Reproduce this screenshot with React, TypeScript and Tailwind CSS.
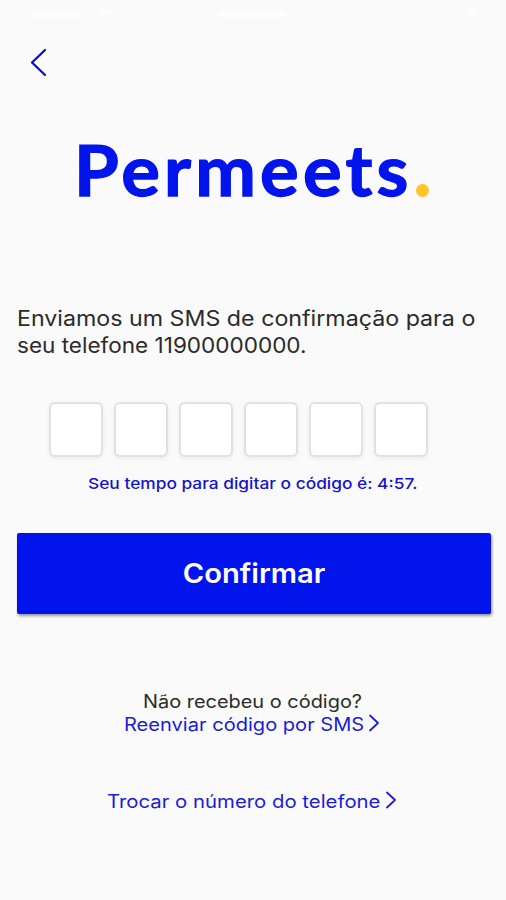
type ChevronProps = {
  points: string;
  className: string;
};

function Chevron({ points, className }: ChevronProps) {
  return (
    <svg className={className} fill="none" stroke="currentColor" strokeLinecap="round" strokeLinejoin="round">
      <polyline points={points} />
    </svg>
  );
}

function StatusBar() {
  return (
    <div className="flex h-[30px] items-center pl-[31px] pr-[31px] opacity-70">
      <div className="h-1.5 w-12 rounded-sm bg-white" />
      <div className="mb-1 ml-5 h-1 w-3 rounded-sm bg-white" />
      <div className="ml-[108px] h-1.5 w-[66px] rounded-sm bg-white" />
      <div className="mb-1 ml-auto h-2.5 w-1.5 rounded-sm bg-white" />
    </div>
  );
}

export default function App() {
  return (
    <div className="h-[900px] w-[506px] overflow-hidden bg-[#fafafa] font-['Inter',sans-serif] text-[#2b2b2b]">
      <StatusBar />

      <button className="ml-[30px] mt-[18px] block text-[#0a0ad8]" aria-label="Voltar">
        <Chevron className="h-7 w-4 stroke-[2.25]" points="15,2 2,14.5 15,27" />
      </button>

      <h1 className="ml-[74px] mt-[58px] flex h-[70px] items-end whitespace-nowrap font-['Lato',sans-serif] text-[70px] font-bold leading-[70px] text-[#0014eb]">
        <span className="w-[342px] origin-left scale-x-[1.035] tracking-[4px] [-webkit-text-stroke:1.25px_#0014eb]">Permeets</span>
        <span className="mb-[7px] size-[13px] rounded-full bg-[#ffc629]" />
      </h1>

      <p className="ml-[17px] mt-[101px] whitespace-nowrap text-[21px] leading-[27px]">
        <span className="block origin-left scale-x-[1.105]">Enviamos um SMS de confirmação para o</span>
        <span className="block origin-left scale-x-[1.073]">seu telefone 11900000000.</span>
      </p>

      <div className="ml-[49px] mt-[43px] flex gap-[11px]">
        {[0, 1, 2, 3, 4, 5].map((i) => (
          <div key={i} className="h-[55px] w-[54px] rounded-md border-2 border-[#e1e1e1] bg-white shadow-[0_2px_5px_rgba(0,0,0,0.06)]" />
        ))}
      </div>

      <p className="ml-[88px] mt-[17px] origin-left scale-x-[1.155] whitespace-nowrap text-[15px] font-medium leading-5 text-[#1414cc]">
        Seu tempo para digitar o código é: 4:57.
      </p>

      <button className="ml-[17px] mt-[39px] block h-[81px] w-[474px] rounded-[2px] bg-[#0014eb] pt-0.5 text-[27px] font-semibold text-white shadow-[1px_2px_3px_rgba(0,0,0,0.4)]">
        <span className="inline-block scale-x-[1.08]">Confirmar</span>
      </button>

      <div className="ml-[124px] mt-[76px] whitespace-nowrap text-[18px] leading-[23px]">
        <p className="ml-[19px] origin-left scale-x-[1.107]">Não recebeu o código?</p>
        <a className="flex items-center text-[#1c1cd6]">
          <span className="w-[245px] origin-left scale-x-[1.115]">Reenviar código por SMS</span>
          <Chevron className="mb-[3px] h-[18px] w-2.5 stroke-[1.75]" points="1,1.5 9,9 1,16.5" />
        </a>
      </div>

      <a className="ml-[107px] mt-[54px] flex items-center whitespace-nowrap text-[18px] leading-[23px] text-[#1c1cd6]">
        <span className="w-[279px] origin-left scale-x-[1.13]">Trocar o número do telefone</span>
        <Chevron className="mb-[3px] h-[18px] w-2.5 stroke-[1.75]" points="1,1.5 9,9 1,16.5" />
      </a>
    </div>
  );
}
